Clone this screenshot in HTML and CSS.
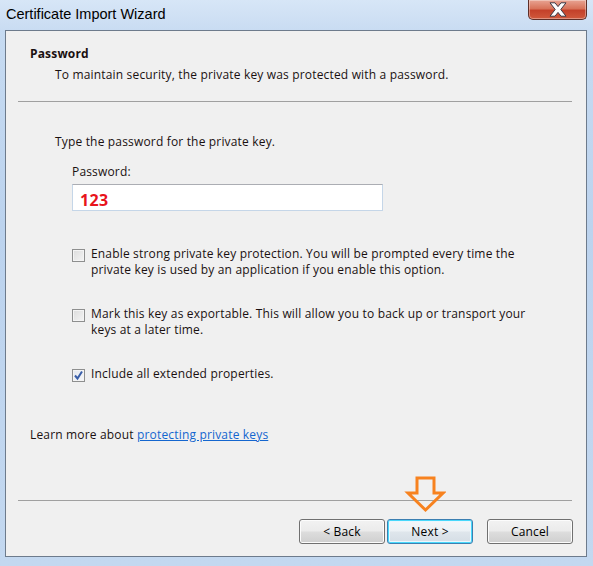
FILE: index.html
```html
<!DOCTYPE html>
<html>
<head>
<meta charset="utf-8">
<link rel="stylesheet" href="styles.css">
</head>
<body>
<div class="window">
  <div class="titlebar">
    <span class="title">Certificate Import Wizard</span>
    <div class="close">
      <svg width="20" height="15" viewBox="0 0 20 15"><path d="M2 0.8 L7 0.8 L10 4.6 L13 0.8 L18 0.8 L12.8 7.5 L18 14.2 L13 14.2 L10 10.4 L7 14.2 L2 14.2 L7.2 7.5 Z" fill="#fdfdfd" stroke="#3f3a44" stroke-width="1"/></svg>
    </div>
  </div>
  <div class="client">
    <div class="header">
      <div class="h-title">Password</div>
      <div class="h-sub">To maintain security, the private key was protected with a password.</div>
    </div>
    <div class="sep sep-top"></div>
    <div class="content">
      <div class="prompt">Type the password for the private key.</div>
      <div class="field-label">Password:</div>
      <div class="input"><span class="pw">123</span></div>
      <div class="check check-1">
        <span class="box"></span>
        <span class="check-text">Enable strong private key protection. You will be prompted every time the private key is used by an application if you enable this option.</span>
      </div>
      <div class="check check-2">
        <span class="box"></span>
        <span class="check-text">Mark this key as exportable. This will allow you to back up or transport your keys at a later time.</span>
      </div>
      <div class="check check-3">
        <span class="box checked"><svg width="11" height="11" viewBox="0 0 11 11"><path d="M2 5.5 L4.5 8.5 L9 1.5" fill="none" stroke="#3a5ea8" stroke-width="2"/></svg></span>
        <span class="check-text">Include all extended properties.</span>
      </div>
      <div class="learn">Learn more about <a href="#" class="link">protecting private keys</a></div>
    </div>
    <div class="sep sep-bottom"></div>
    <div class="buttons">
      <div class="btn">&lt; Back</div>
      <div class="btn btn-default">Next &gt;</div>
      <div class="btn btn-cancel">Cancel</div>
    </div>
    <svg class="arrow" width="42" height="38" viewBox="0 0 42 38"><polygon points="13,3 30,3 30,18 39,18 21.5,35 4,18 13,18" fill="none" stroke="#f7821f" stroke-width="3" stroke-linejoin="miter"/></svg>
  </div>
</div>
</body>
</html>
```

FILE: styles.css
```css
html, body {
  margin: 0;
  padding: 0;
}
body {
  width: 593px;
  height: 566px;
  overflow: hidden;
  background: linear-gradient(180deg, #c8dcf2 0%, #bcd3ee 40%, #c3d8f0 100%);
  font-family: "Open Sans", "Noto Sans", "Liberation Sans", sans-serif;
  font-size: 12px;
  letter-spacing: 0.17px;
  color: #1a1010;
}
.window {
  width: 593px;
  height: 566px;
}
.titlebar {
  height: 30px;
  display: flex;
  align-items: flex-start;
  justify-content: space-between;
  background: linear-gradient(180deg, #d7e6f7 0%, #c9dcf2 100%);
}
.title {
  font-family: "Liberation Sans", Arial, sans-serif;
  font-size: 14.5px;
  line-height: 20px;
  margin: 4px 0 0 6px;
  color: #000;
  letter-spacing: 0;
}
.close {
  width: 57px;
  height: 19px;
  margin-right: 6px;
  border: 1px solid #5e2f28;
  border-top: none;
  border-radius: 0 0 5px 5px;
  background: linear-gradient(180deg, #e8a493 0%, #d8735a 45%, #c4412a 55%, #d0593c 100%);
  display: flex;
  align-items: center;
  justify-content: center;
  box-shadow: inset 0 0 0 1px rgba(255,255,255,0.35);
}
.close svg {
  display: block;
}
.client {
  position: relative;
  margin-left: 5px;
  width: 580px;
  height: 525px;
  background: #f0f0f0;
  border: 1px solid #6d7b8c;
}
.header {
  padding-left: 24px;
  padding-top: 15px;
}
.h-title {
  font-weight: bold;
  line-height: 16px;
}
.h-sub {
  line-height: 16px;
  margin-top: 5px;
  padding-left: 25px;
}
.sep {
  height: 1px;
  background: #a0a0a0;
  margin-left: 12px;
  width: 554px;
}
.sep-top {
  margin-top: 18px;
}
.content {
  padding-left: 49px;
}
.prompt {
  line-height: 16px;
  margin-top: 32px;
}
.field-label {
  line-height: 16px;
  margin-top: 14px;
  margin-left: 17px;
}
.input {
  margin-top: 4px;
  margin-left: 17px;
  width: 309px;
  height: 25px;
  background: #fff;
  border: 1px solid #c5d6e8;
  border-top-color: #abadb3;
  display: flex;
  align-items: flex-end;
}
.pw {
  color: #e8141c;
  font-weight: bold;
  font-size: 16px;
  line-height: 20px;
  margin-left: 7px;
  letter-spacing: 0.3px;
}
.check {
  display: flex;
  align-items: flex-start;
  gap: 6px;
  margin-left: 17px;
  width: 470px;
}
.check-1 { margin-top: 35px; }
.check-2 { margin-top: 28px; }
.check-3 { margin-top: 28px; }
.box {
  flex: none;
  width: 11px;
  height: 11px;
  margin-top: 3px;
  border: 1px solid #8e8f8f;
  background: linear-gradient(135deg, #dcdcdc 0%, #f4f4f4 100%);
  box-shadow: inset 0 0 0 1px #f4f4f4;
  display: flex;
  align-items: center;
  justify-content: center;
}
.box.checked {
  background: linear-gradient(135deg, #e4e8ef 0%, #f6f7f9 100%);
}
.box svg { display: block; }
.check-text {
  line-height: 16px;
}
.learn {
  line-height: 16px;
  margin-top: 45px;
  margin-left: -25px;
}
.link {
  color: #1466cf;
  text-decoration: underline;
}
.sep-bottom {
  margin-top: 57px;
}
.buttons {
  display: flex;
  justify-content: flex-end;
  gap: 2px;
  margin-top: 18px;
  padding-right: 13px;
}
.btn {
  width: 84px;
  height: 23px;
  border: 1px solid #707070;
  border-radius: 3px;
  background: linear-gradient(180deg, #f2f2f2 0%, #ebebeb 48%, #dddddd 52%, #cfcfcf 100%);
  box-shadow: inset 0 0 0 1px #fcfcfc;
  display: flex;
  align-items: center;
  justify-content: center;
  line-height: 16px;
  color: #000;
}
.btn-default {
  border-color: #3c7fb1;
  box-shadow: inset 0 0 0 1px #48d8fb, inset 0 0 0 2px #eaf6fd;
  background: linear-gradient(180deg, #f4f7f9 0%, #ecf1f5 48%, #dfe6ec 52%, #d4dde5 100%);
}
.btn-cancel {
  margin-left: 12px;
}
.arrow {
  position: absolute;
  left: 398px;
  top: 444px;
}
```
